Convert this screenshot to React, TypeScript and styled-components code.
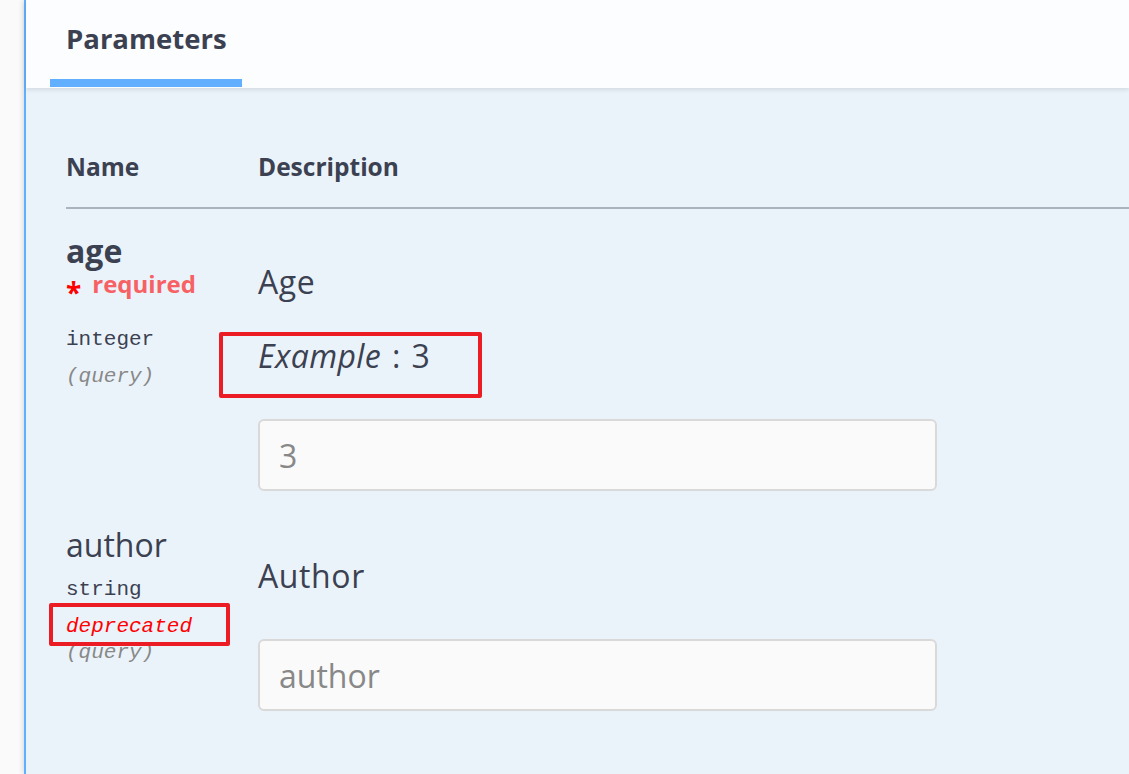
import React from "react";
import styled, { createGlobalStyle } from "styled-components";

const Global = createGlobalStyle`
  html, body { margin: 0; padding: 0; background: #fafafa; overflow: hidden; }
  body { font-family: "Open Sans", "Noto Sans", sans-serif; color: #3b4151; }
  * { box-sizing: border-box; }
`;

const Page = styled.div`
  width: 1129px;
  height: 774px;
  overflow: hidden;
  padding-left: 24px;
`;

const Opblock = styled.section`
  height: 100%;
  background: #ebf3fa;
  border-left: 2px solid #61affe;
  box-shadow: 0 0 6px rgba(0, 0, 0, 0.19);
`;

const SectionHeader = styled.div`
  height: 88px;
  padding-left: 24px;
  background: rgba(255, 255, 255, 0.8);
  box-shadow: 0 2px 4px rgba(0, 0, 0, 0.1);
  display: flex;
  align-items: flex-start;
`;

const Tab = styled.div`
  width: 192px;
  height: 87px;
  padding: 19px 0 0 16px;
  border-bottom: 8px solid #61affe;
`;

const TabTitle = styled.h4`
  margin: 0;
  font-size: 27.5px;
  line-height: 40px;
  font-weight: 700;
  color: #3b4151;
`;

const TableWrap = styled.div`
  padding-left: 40px;
`;

const HeadRow = styled.div`
  display: grid;
  grid-template-columns: 192px 1fr;
  padding: 64px 0 25px;
  border-bottom: 2px solid #acb2bd;
`;

const HeadCell = styled.div`
  font-size: 24.5px;
  line-height: 30px;
  font-weight: 700;
  color: #3b4151;
`;

const Row = styled.div`
  display: grid;
  grid-template-columns: 192px 1fr;
  padding: 24px 0 12px;
`;

const NameCol = styled.div`
  display: flex;
  flex-direction: column;
  align-items: flex-start;
`;

const ParamName = styled.div<{ $required?: boolean }>`
  font-size: 32px;
  line-height: 36px;
  font-weight: ${(p) => (p.$required ? 700 : 400)};
  color: #3b4151;
`;

const Required = styled.div`
  font-size: 24px;
  line-height: 30px;
  font-weight: 700;
  color: #f76164;
  margin-bottom: 6px;
  white-space: nowrap;
`;

const Star = styled.span`
  color: #ff0000;
  font-size: 28px;
  vertical-align: -10px;
  margin-right: 11px;
`;

const Mono = styled.div`
  font-family: "Liberation Mono", "DejaVu Sans Mono", monospace;
  font-size: 21px;
  line-height: 26px;
  white-space: nowrap;
`;

const TypeLabel = styled(Mono)`
  color: #3b4151;
  margin-top: 14px;
  margin-bottom: 11px;
`;

const InLabel = styled(Mono)`
  color: #888888;
  font-style: italic;
`;

const Deprecated = styled(Mono)`
  position: relative;
  color: #ff0000;
  font-style: italic;
`;

const Annotation = styled.span<{ $l: number; $t: number; $w: number; $h: number }>`
  position: absolute;
  left: ${(p) => p.$l}px;
  top: ${(p) => p.$t}px;
  width: ${(p) => p.$w}px;
  height: ${(p) => p.$h}px;
  border: 4px solid #ec1c24;
  border-radius: 2px;
  pointer-events: none;
`;

const DescCol = styled.div`
  display: flex;
  flex-direction: column;
  align-items: flex-start;
`;

const DescText = styled.p`
  margin: 29px 0 0;
  font-size: 32px;
  line-height: 40px;
  letter-spacing: 0.6px;
  color: #3b4151;
`;

const Example = styled.div`
  position: relative;
  margin-top: 34px;
  font-size: 32px;
  line-height: 40px;
  letter-spacing: 0.4px;
  word-spacing: 2px;
  color: #3b4151;
  & i { font-style: italic; }
`;

const Input = styled.input`
  margin-top: 43px;
  width: 679px;
  height: 72px;
  padding: 0 19px;
  border: 2px solid #d9d9d9;
  border-radius: 6px;
  background: #fafafa;
  font-family: "Open Sans", "Noto Sans", sans-serif;
  font-size: 32px;
  color: #3b4151;
  outline: none;
  &::placeholder { color: #888888; opacity: 1; }
`;

export default function App() {
  return (
    <>
      <Global />
      <Page>
        <Opblock>
          <SectionHeader>
            <Tab>
              <TabTitle>Parameters</TabTitle>
            </Tab>
          </SectionHeader>
          <TableWrap>
            <HeadRow>
              <HeadCell>Name</HeadCell>
              <HeadCell>Description</HeadCell>
            </HeadRow>
            <Row>
              <NameCol>
                <ParamName $required>age</ParamName>
                <Required>
                  <Star>*</Star>required
                </Required>
                <TypeLabel>integer</TypeLabel>
                <InLabel>(query)</InLabel>
              </NameCol>
              <DescCol>
                <DescText>Age</DescText>
                <Example>
                  <i>Example</i> : 3
                  <Annotation $l={-39} $t={-4} $w={263} $h={66} />
                </Example>
                <Input placeholder="3" />
              </DescCol>
            </Row>
            <Row>
              <NameCol>
                <ParamName>author</ParamName>
                <TypeLabel>string</TypeLabel>
                <Deprecated>
                  deprecated
                  <Annotation $l={-17} $t={-11} $w={181} $h={43} />
                </Deprecated>
                <InLabel>(query)</InLabel>
              </NameCol>
              <DescCol>
                <DescText>Author</DescText>
                <Input placeholder="author" />
              </DescCol>
            </Row>
          </TableWrap>
        </Opblock>
      </Page>
    </>
  );
}
